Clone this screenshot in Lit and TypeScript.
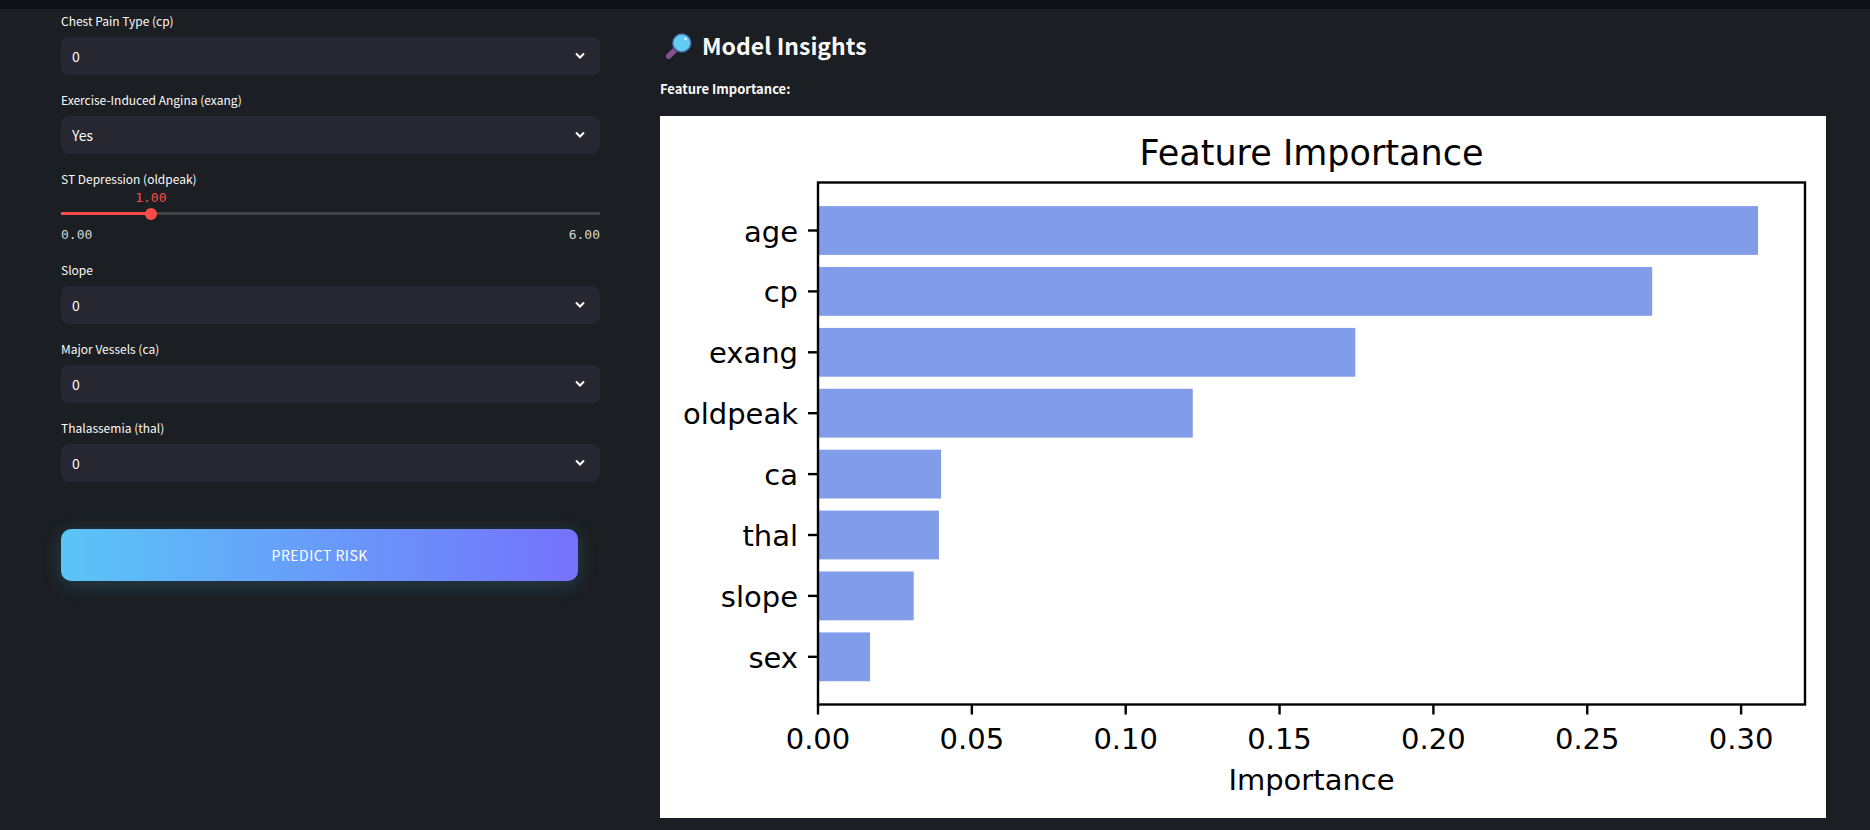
import { LitElement, html, svg, css } from "lit";
import { customElement, property, state } from "lit/decorators.js";

@customElement("select-field")
class SelectField extends LitElement {
  @property() label = "";
  @property({ type: Array }) options: string[] = [];

  static styles = css`
    :host {
      display: flex;
      flex-direction: column;
      gap: 6px;
    }
    .label {
      font-size: 12px;
      line-height: 20px;
    }
    .box {
      display: grid;
      align-items: center;
    }
    .select,
    .chevron {
      grid-area: 1 / 1;
    }
    .select {
      appearance: none;
      width: 100%;
      height: 38px;
      padding: 0 40px 0 11px;
      border: 0;
      border-radius: 8px;
      background: #262730;
      color: #fafafa;
      font: inherit;
      font-size: 14px;
    }
    .chevron {
      justify-self: end;
      width: 16px;
      height: 16px;
      margin-right: 12px;
      pointer-events: none;
    }
  `;

  render() {
    return html`
      <label class="label" for="control">${this.label}</label>
      <div class="box">
        <select class="select" id="control">
          ${this.options.map((o) => html`<option>${o}</option>`)}
        </select>
        <svg class="chevron" viewBox="0 0 16 16" aria-hidden="true">
          <path d="M4 5.5 8 9.5 12 5.5" fill="none" stroke="#fff" stroke-width="2" />
        </svg>
      </div>
    `;
  }
}

@customElement("slider-field")
class SliderField extends LitElement {
  @property() label = "";
  @property({ type: Number }) min = 0;
  @property({ type: Number }) max = 1;
  @property({ type: Number }) value = 0;

  static styles = css`
    :host {
      display: flex;
      flex-direction: column;
    }
    .label {
      font-size: 12px;
      line-height: 20px;
    }
    .mono {
      font-family: "DejaVu Sans Mono", monospace;
      font-size: 13px;
      line-height: 18px;
    }
    .value {
      display: flex;
      justify-content: center;
      width: 0;
      color: #ff4b4b;
    }
    /* The input overhangs by the thumb's radius, so the thumb's centre runs the full track. */
    .range {
      appearance: none;
      display: block;
      width: calc(100% + 12px);
      height: 12px;
      margin: 0 -6px;
      background: transparent;
    }
    .range::-webkit-slider-runnable-track {
      height: 3px;
      background: linear-gradient(to right, #ff4b4b var(--fill), #404245 var(--fill)) 6px 0 /
        calc(100% - 12px) 100% no-repeat;
    }
    .range::-webkit-slider-thumb {
      appearance: none;
      width: 12px;
      height: 12px;
      margin-top: -4px;
      border-radius: 50%;
      background: #ff4b4b;
    }
    .ends {
      display: flex;
      justify-content: space-between;
      padding: 7px 0 1px;
      color: #d5d5d6;
    }
  `;

  render() {
    const share = ((this.value - this.min) / (this.max - this.min)) * 100;
    return html`
      <label class="label" for="control">${this.label}</label>
      <div class="value mono" style="margin-left:${share}%">
        <output for="control">${this.value.toFixed(2)}</output>
      </div>
      <input
        class="range"
        id="control"
        type="range"
        min=${this.min}
        max=${this.max}
        step="0.01"
        .value=${String(this.value)}
        style="--fill:${share}%"
        @input=${(e: Event) => (this.value = Number((e.target as HTMLInputElement).value))}
      />
      <div class="ends mono"><span>${this.min.toFixed(2)}</span><span>${this.max.toFixed(2)}</span></div>
    `;
  }
}

@customElement("importance-chart")
class ImportanceChart extends LitElement {
  @state() rows: [string, number][] = [
    ["age", 0.3055],
    ["cp", 0.2711],
    ["exang", 0.1746],
    ["oldpeak", 0.1218],
    ["ca", 0.04],
    ["thal", 0.0393],
    ["slope", 0.0311],
    ["sex", 0.0169],
  ];

  static styles = css`
    :host {
      display: block;
      background: #fff;
    }
    .chart {
      display: block;
      width: 100%;
      font-family: "DejaVu Sans", sans-serif;
      font-size: 29px;
    }
    .title {
      font-size: 35px;
    }
    .bar {
      fill: #819dea;
    }
    .line {
      fill: none;
      stroke: #000;
      stroke-width: 2.4;
    }
  `;

  render() {
    const left = 158;
    const right = 1145;
    const top = 66.5;
    const bottom = 588.5;
    const unit = 3077;
    const pitch = 60.9;
    const ticks = [0, 0.05, 0.1, 0.15, 0.2, 0.25, 0.3];
    return html`
      <svg class="chart" viewBox="0 0 1166 702" role="img" aria-label="Feature Importance">
        <text class="title" x=${(left + right) / 2} y="49" text-anchor="middle">Feature Importance</text>
        ${this.rows.map(([name, value], i) => {
          const y = 114.5 + i * pitch;
          return svg`
            <rect class="bar" x=${left} y=${y - 24.4} width=${value * unit} height="48.8" />
            <path class="line" d="M${left - 10} ${y}H${left}" />
            <text x=${left - 20} y=${y + 11} text-anchor="end">${name}</text>`;
        })}
        ${ticks.map((t) => {
          const x = left + t * unit;
          return svg`
            <path class="line" d="M${x} ${bottom}v10" />
            <text x=${x} y="633" text-anchor="middle">${t.toFixed(2)}</text>`;
        })}
        <rect class="line" x=${left} y=${top} width=${right - left} height=${bottom - top} />
        <text x=${(left + right) / 2} y="674" text-anchor="middle">Importance</text>
      </svg>
    `;
  }
}

@customElement("app-root")
class AppRoot extends LitElement {
  static styles = css`
    :host {
      display: block;
      min-height: 100vh;
      box-sizing: border-box;
      border-top: 9px solid #0e1117;
      background: #1b1e22;
      color: #fafafa;
      font-family: "Noto Sans CJK SC", "Noto Sans", sans-serif;
    }
    .layout {
      display: grid;
      grid-template-columns: 539fr 1166fr;
      gap: 60px;
      padding: 0 44px 12px 61px;
    }
    .form {
      display: flex;
      flex-direction: column;
      gap: 15px;
      padding-top: 2px;
    }
    .predict {
      width: 96%;
      height: 52px;
      margin-top: 32px;
      border: 0;
      border-radius: 10px;
      background: linear-gradient(90deg, #5bc5f7, #7572fb);
      box-shadow: 0 4px 20px rgba(79, 195, 247, 0.2);
      color: #fff;
      font: inherit;
      font-size: 14px;
      letter-spacing: 0.5px;
    }
    .insights {
      padding-top: 19px;
    }
    .heading {
      display: flex;
      align-items: center;
      gap: 10px;
      margin: 0;
      padding-left: 5px;
      font-size: 23px;
      line-height: 34px;
      font-weight: 700;
    }
    .glass {
      width: 27px;
      height: 27px;
    }
    .caption {
      margin: 0;
      padding: 16px 0;
      font-size: 13px;
      line-height: 22px;
      font-weight: 700;
    }
  `;

  render() {
    const levels = ["0", "1", "2", "3"];
    return html`
      <main class="layout">
        <form class="form" @submit=${(e: Event) => e.preventDefault()}>
          <select-field label="Chest Pain Type (cp)" .options=${levels}></select-field>
          <select-field label="Exercise-Induced Angina (exang)" .options=${["Yes", "No"]}></select-field>
          <slider-field label="ST Depression (oldpeak)" min="0" max="6" value="1"></slider-field>
          <select-field label="Slope" .options=${levels}></select-field>
          <select-field label="Major Vessels (ca)" .options=${levels}></select-field>
          <select-field label="Thalassemia (thal)" .options=${levels}></select-field>
          <button class="predict" type="submit">PREDICT RISK</button>
        </form>
        <section class="insights">
          <h3 class="heading">
            <svg class="glass" viewBox="0 0 27 27" aria-hidden="true">
              <path d="M10.5 17.5 3.6 24.2" stroke="#8a4f8f" stroke-width="5.4" stroke-linecap="round" />
              <path d="M12.4 15.4 9.4 18.4" stroke="#533566" stroke-width="4" />
              <circle cx="16.8" cy="11" r="9" fill="#62cdf0" stroke="#4a6fae" stroke-width="1.4" />
              <circle cx="20.6" cy="7" r="1.4" fill="#c9f1fd" />
            </svg>
            Model Insights
          </h3>
          <p class="caption">Feature Importance:</p>
          <importance-chart></importance-chart>
        </section>
      </main>
    `;
  }
}
